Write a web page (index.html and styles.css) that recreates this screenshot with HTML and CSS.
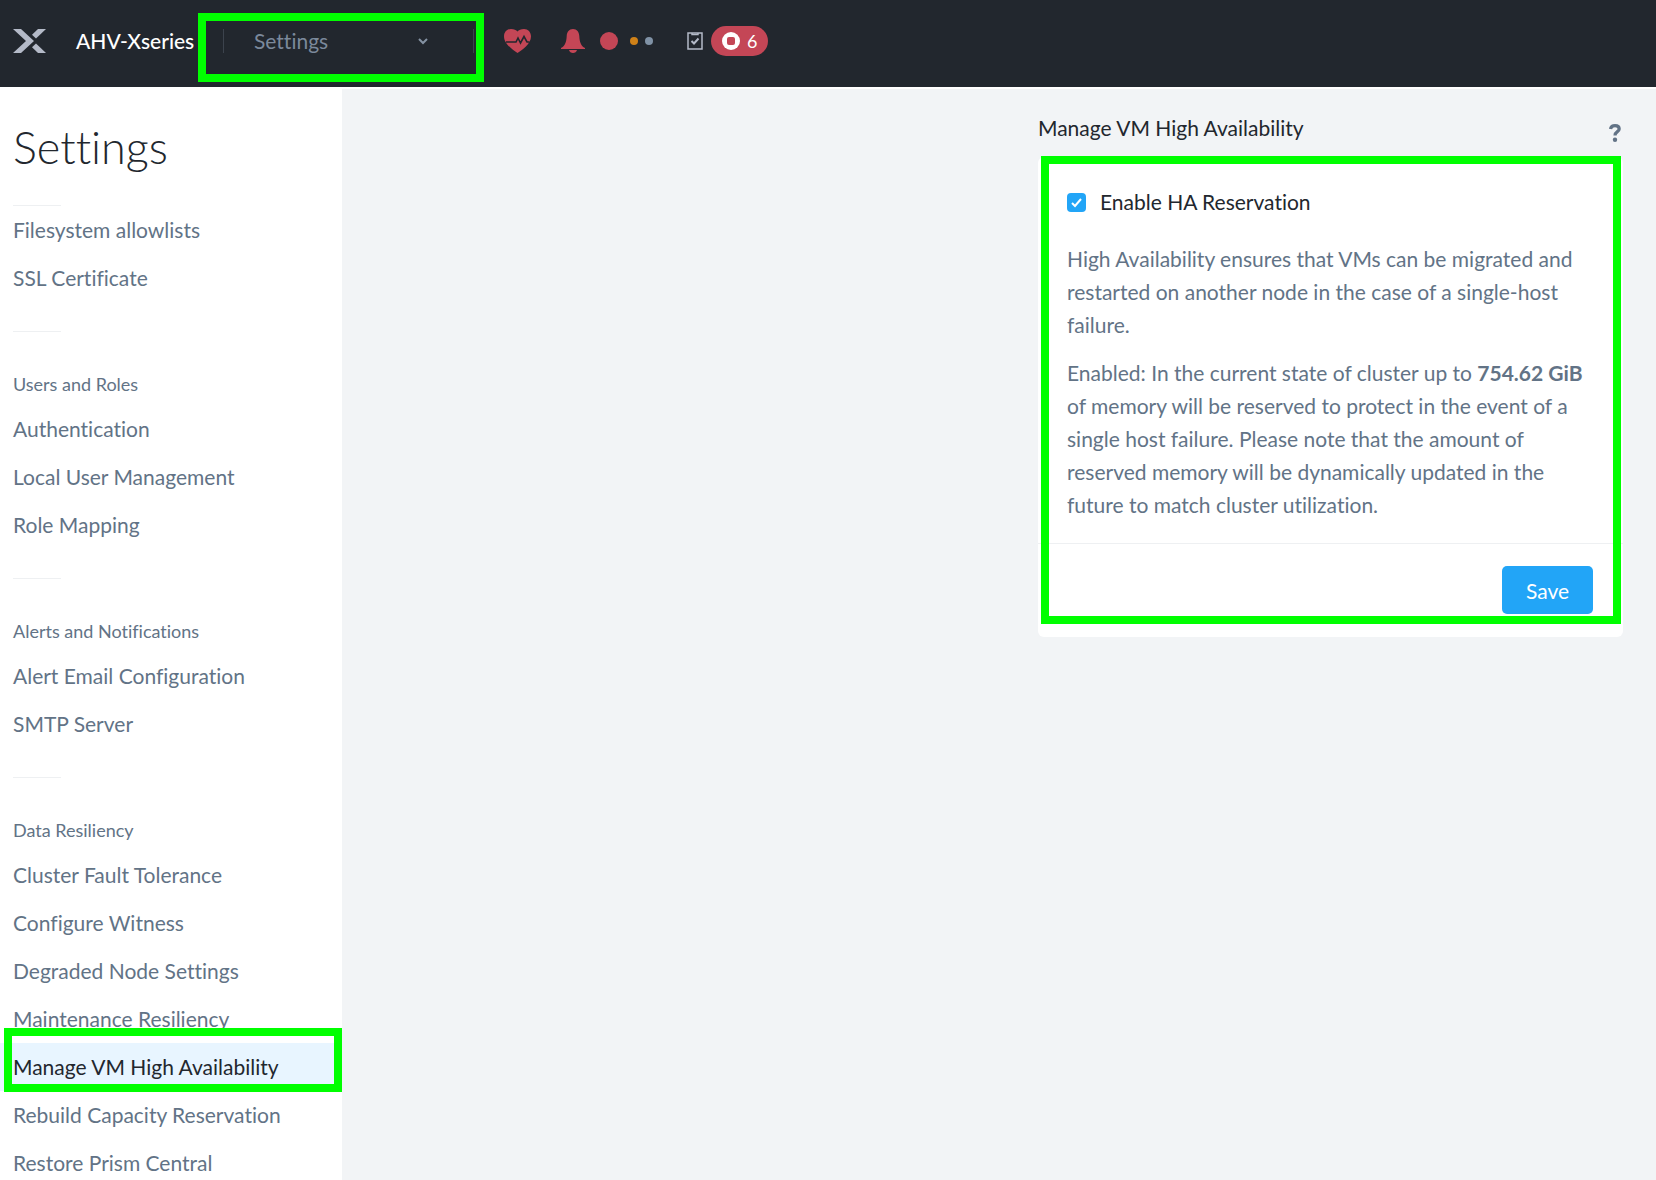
FILE: index.html
```html
<!DOCTYPE html>
<html lang="en">
<head>
<meta charset="utf-8">
<title>Settings - AHV-Xseries</title>
<link rel="stylesheet" href="styles.css">
</head>
<body>
<header class="topbar">
  <a class="brand" href="#" aria-label="Home">
    <svg width="33" height="24" viewBox="0 0 33 24" fill="#b4bac8"><path d="M0 0H8L21 12L8 24H0L13 12Z"/><path d="M25 0H33L23 9.500L19 5.700Z"/><path d="M25 24H33L23 14.500L19 18.300Z"/></svg>
  </a>
  <a class="cluster" href="#">AHV-Xseries</a>
  <div class="switcher">
    <button class="switcher-button" type="button">
      <span>Settings</span>
      <svg width="10" height="7" viewBox="0 0 10 7" fill="none" stroke="#8592a3" stroke-width="2"><path d="M1 1L5 5L9 1"/></svg>
    </button>
    <span class="highlight highlight-switcher"></span>
  </div>
  <a class="health" href="#" aria-label="Health">
    <svg width="27" height="24" viewBox="0 0 27 24"><path fill="#c44656" d="M13.500 24C9 21 0 15 0 7.500C0 3 3 0 7 0C10 0 12.300 1 13.500 2.500C14.700 1 17 0 20 0C24 0 27 3 27 7.500C27 15 18 21 13.500 24Z"/><path d="M2 13H12L14 9L16.500 14L20 7.500L23 13H25.500" fill="none" stroke="#22272e" stroke-width="1.600"/></svg>
  </a>
  <a class="alerts" href="#" aria-label="Alerts">
    <svg width="24" height="24" viewBox="0 0 24 24" fill="#c44656"><path d="M12 0C16 0 18 3 18.300 7C18.600 13 20 17 24 19V20H0V19C4 17 5.400 13 5.700 7C6 3 8 0 12 0Z"/><path d="M8 21H16C15.500 23 14 24 12 24C10 24 8.500 23 8 21Z"/></svg>
    <span class="dot dot-critical"></span>
    <span class="dot dot-warning"></span>
    <span class="dot dot-info"></span>
  </a>
  <a class="tasks" href="#">
    <svg width="16" height="18" viewBox="0 0 16 18" fill="none" stroke="#b4bac8"><path stroke-width="1.500" d="M1 1H15V17H1Z"/><path stroke-width="1.500" d="M5 1V2.600H11V1"/><path stroke-width="2" d="M4.500 9L7 11.500L11.500 6.500"/></svg>
    <span class="task-pill">
      <svg width="18" height="18" viewBox="0 0 18 18"><circle cx="9" cy="9" r="9" fill="#fff"/><rect x="5" y="5" width="8" height="8" rx="2" fill="#c44656"/></svg>
      <span>6</span>
    </span>
  </a>
</header>
<div class="layout">
  <nav class="sidebar" aria-label="Settings">
    <h1 class="sidebar-title">Settings</h1>
    <section class="group">
      <a href="#">Filesystem allowlists</a>
      <a href="#">SSL Certificate</a>
    </section>
    <section class="group">
      <h2>Users and Roles</h2>
      <a href="#">Authentication</a>
      <a href="#">Local User Management</a>
      <a href="#">Role Mapping</a>
    </section>
    <section class="group">
      <h2>Alerts and Notifications</h2>
      <a href="#">Alert Email Configuration</a>
      <a href="#">SMTP Server</a>
    </section>
    <section class="group">
      <h2>Data Resiliency</h2>
      <a href="#">Cluster Fault Tolerance</a>
      <a href="#">Configure Witness</a>
      <a href="#">Degraded Node Settings</a>
      <a href="#">Maintenance Resiliency</a>
      <a class="current" href="#" aria-current="page">Manage VM High Availability<span class="highlight highlight-item"></span></a>
      <a href="#">Rebuild Capacity Reservation</a>
      <a href="#">Restore Prism Central</a>
    </section>
  </nav>
  <main class="content">
    <form class="panel">
      <div class="panel-head">
        <h2>Manage VM High Availability</h2>
        <button class="help" type="button" aria-label="Help">
          <svg width="12" height="18" viewBox="0 0 12 18"><path d="M1.500 5C2 2.500 3.500 1.700 6 1.700C8.500 1.700 10.200 3 10.200 5C10.200 7.800 6 7.500 6 11.500" fill="none" stroke="#627386" stroke-width="3.200"/><circle cx="6" cy="15.800" r="2.200" fill="#627386"/></svg>
        </button>
      </div>
      <div class="card">
        <div class="card-body">
          <label class="check"><input type="checkbox" checked><span>Enable HA Reservation</span></label>
          <p>High Availability ensures that VMs can be migrated and restarted on another node in the case of a single-host failure.</p>
          <p>Enabled: In the current state of cluster up to <strong>754.62 GiB</strong> of memory will be reserved to protect in the event of a single host failure. Please note that the amount of reserved memory will be dynamically updated in the future to match cluster utilization.</p>
        </div>
        <div class="card-foot"><button class="save" type="submit">Save</button></div>
        <span class="highlight highlight-card"></span>
      </div>
    </form>
  </main>
</div>
</body>
</html>
```
FILE: styles.css
```css
* { box-sizing: border-box; }
body {
  margin: 0;
  height: 100vh;
  display: flex;
  flex-direction: column;
  background: #f2f4f6;
  color: #627386;
  font-family: Lato, "Liberation Sans", sans-serif;
  font-size: 21px;
  font-variant-ligatures: none;
  line-height: 24px;
}
a { color: inherit; text-decoration: none; }
h1, h2, p { margin: 0; font-weight: 400; }
button { font: inherit; border: 0; padding: 0; background: none; cursor: pointer; }
svg { display: block; flex: none; }

.topbar {
  flex: none;
  display: flex;
  align-items: center;
  height: 88px;
  padding: 0 13px 5px;
  background: #22272e;
  border-bottom: 1px solid #fff;
}
.brand { width: 63px; }
.cluster { width: 122px; color: #fff; font-weight: 500; white-space: nowrap; }
.switcher { position: relative; width: 276px; padding-left: 25px; }
.switcher-button {
  display: flex;
  align-items: center;
  justify-content: space-between;
  width: 251px;
  height: 24px;
  padding: 0 45px 0 30px;
  border: solid #3c434d;
  border-width: 0 1px;
  color: #7b899b;
}
.health { margin-left: 30px; }
.alerts { display: flex; align-items: center; margin-left: 30px; }
.dot { border-radius: 50%; }
.dot-critical { width: 18px; height: 18px; margin-left: 15px; background: #c44656; }
.dot-warning { width: 8px; height: 8px; margin-left: 12px; background: #cf8118; }
.dot-info { width: 8px; height: 8px; margin-left: 7px; background: #8092a6; }
.tasks { display: flex; align-items: center; gap: 8px; margin-left: 34px; }
.task-pill {
  display: flex;
  align-items: center;
  gap: 7px;
  height: 30px;
  padding: 0 11px;
  border-radius: 15px;
  background: #c44656;
  color: #fff;
  font-size: 18px;
}

.highlight { position: absolute; border: 8px solid #00ff00; pointer-events: none; }
.highlight-switcher { left: 0; right: -10px; top: -16px; height: 69px; }
.highlight-item { left: 4px; right: 0; top: -15px; height: 64px; z-index: 1; }
.highlight-card { left: 3px; right: 2px; top: -1px; bottom: 13px; }

.layout { flex: 1; display: flex; min-height: 0; }
.sidebar {
  flex: none;
  width: 342px;
  background: #fff;
  overflow-y: auto;
  scrollbar-width: none;
}
.sidebar-title {
  padding: 32px 13px 31px;
  color: #22272e;
  font-size: 45px;
  font-weight: 300;
  line-height: 54px;
}
.group { padding-bottom: 29px; }
.group::before {
  content: "";
  display: block;
  width: 48px;
  height: 1px;
  margin-left: 13px;
  background: #eef0f2;
}
.group h2 { padding: 40px 13px 9px; font-size: 18px; }
.group a { position: relative; display: block; padding: 12px 13px; white-space: nowrap; }
.group .current { background: #e8f5ff; color: #22272e; }

.content { flex: 1; display: flex; justify-content: flex-end; align-items: flex-start; padding: 27px 33px; border-top: 1px solid #fff; }
.panel { width: 585px; }
.panel-head { display: flex; justify-content: space-between; padding-bottom: 15px; color: #22272e; }
.panel-head h2 { font-size: 21px; }
.help { padding: 8px 2px 0; }
.card { position: relative; border-radius: 6px; background: #fff; }
.card-body { padding: 33px 29px 22px; }
.check { display: flex; align-items: center; gap: 14px; color: #22272e; }
.check input {
  appearance: none;
  width: 19px;
  height: 19px;
  margin: 0;
  border-radius: 4px;
  background: #22a5f7 url('data:image/svg+xml,<svg xmlns="http://www.w3.org/2000/svg" viewBox="0 0 19 19"><path d="M5 10L8 13L14 6" fill="none" stroke="white" stroke-width="2"/></svg>');
}
.card-body p { margin-top: 15px; line-height: 33px; }
.card-body .check + p { margin-top: 28px; }
.card-foot { display: flex; justify-content: flex-end; padding: 22px 30px 23px; border-top: 1px solid #eef0f2; }
.save { width: 91px; height: 48px; padding-top: 2px; border-radius: 5px; background: #22a5f7; color: #fff; }
```
